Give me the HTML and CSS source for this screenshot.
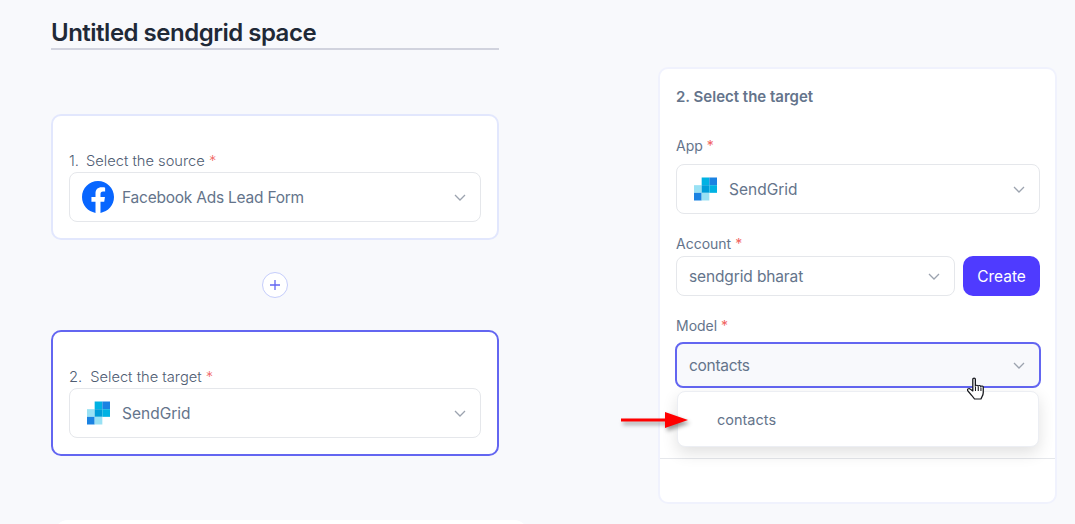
FILE: index.html
```html
<!DOCTYPE html>
<html lang="en">
<head>
<meta charset="utf-8">
<title>Untitled sendgrid space</title>
<link rel="stylesheet" href="styles.css">
</head>
<body>
<svg class="defs" width="0" height="0" aria-hidden="true">
  <defs>
    <symbol id="sendgrid" viewBox="0 0 24 24">
      <rect x="8" y="0" width="8" height="8" fill="#00b2e3"/>
      <rect x="16" y="0" width="8" height="8" fill="#1a82e2"/>
      <rect x="0" y="8" width="8" height="8" fill="#99e1f4"/>
      <rect x="8" y="8" width="8" height="8" fill="#009dd9"/>
      <rect x="16" y="8" width="8" height="8" fill="#00b2e3"/>
      <rect x="0" y="16" width="8" height="8" fill="#1a82e2"/>
      <rect x="8" y="16" width="8" height="8" fill="#99e1f4"/>
    </symbol>
    <symbol id="chevron" viewBox="0 0 12 7">
      <path d="M1 1l5 5 5-5" fill="none" stroke="#9ca3af" stroke-width="1.3"/>
    </symbol>
  </defs>
</svg>
<main class="page">
  <section class="flow">
    <h1 class="title">Untitled sendgrid space</h1>
    <div class="card card-source">
      <div class="step"><span class="step-num">1.</span>Select the source <span class="req">*</span></div>
      <div class="select select-wide">
        <svg class="fb" viewBox="0 0 24 24" aria-hidden="true"><circle cx="12" cy="12" r="11" fill="#fff"/><path fill="#0866ff" d="M24 12.073c0-6.627-5.373-12-12-12s-12 5.373-12 12c0 5.990 4.388 10.954 10.125 11.854v-8.385H7.078v-3.470h3.047V9.430c0-3.007 1.792-4.669 4.533-4.669 1.312 0 2.686.235 2.686.235v2.953H15.830c-1.491 0-1.956.925-1.956 1.874v2.250h3.328l-.532 3.470h-2.796v8.385C19.612 23.027 24 18.062 24 12.073z"/></svg>
        <span class="value value-fb">Facebook Ads Lead Form</span>
        <svg class="chev"><use href="#chevron"/></svg>
      </div>
    </div>
    <div class="add-row">
      <div class="add"><svg viewBox="0 0 12 12" aria-hidden="true"><path d="M6 1v10M1 6h10" stroke="#6366f1" stroke-width="1.3" fill="none"/></svg></div>
    </div>
    <div class="card card-target">
      <div class="step"><span class="step-num step-num-2">2.</span>Select the target <span class="req">*</span></div>
      <div class="select select-wide">
        <svg class="sg sg-left"><use href="#sendgrid"/></svg>
        <span class="value">SendGrid</span>
        <svg class="chev"><use href="#chevron"/></svg>
      </div>
    </div>
    <div class="card-next"></div>
  </section>

  <aside class="panel">
    <h2 class="panel-title">2. Select the target</h2>
    <label class="field-label label-app">App <span class="req">*</span></label>
    <div class="select select-app">
      <svg class="sg sg-right"><use href="#sendgrid"/></svg>
      <span class="value">SendGrid</span>
      <svg class="chev"><use href="#chevron"/></svg>
    </div>
    <label class="field-label label-account">Account <span class="req">*</span></label>
    <div class="account-row">
      <div class="select select-account">
        <span class="value value-account">sendgrid bharat</span>
        <svg class="chev"><use href="#chevron"/></svg>
      </div>
      <button class="create">Create</button>
    </div>
    <label class="field-label label-model">Model <span class="req">*</span></label>
    <div class="model-wrap">
      <div class="select select-model">
        <span class="value value-model">contacts</span>
        <svg class="chev"><use href="#chevron"/></svg>
      </div>
      <div class="menu"><span class="menu-item">contacts</span></div>
      <svg class="arrow" viewBox="0 0 68 18" aria-hidden="true"><path d="M0 7.500h44V1l23 8-23 8v-6.500H0z" fill="#f00"/></svg>
      <svg class="hand" viewBox="1 0 15.500 24" preserveAspectRatio="none" aria-hidden="true"><path d="M6 2.200c0-1.500 2.200-1.500 2.200 0v7c.3-1.400 2.300-1.300 2.400.1.300-1.200 2.200-1.100 2.300.3.400-1 2-.8 2.100.5v5.400c0 2-.5 3-1 4-.5 1.200-1 2.500-1 2.500H7.500s-1-1.500-2-3C4.500 17.500 1.800 14.200 1.500 13.500c-.6-1.400 1.100-2.400 2.300-1.400L6 14z" fill="#fff" stroke="#16181d" stroke-width="1.100" stroke-linejoin="round"/><path d="M8.300 10v4M10.700 10v4M13 10.500v3.500" stroke="#16181d" stroke-width=".9" fill="none"/></svg>
    </div>
    <div class="panel-divider"></div>
  </aside>
</main>
</body>
</html>
```

FILE: styles.css
```css
* { box-sizing: border-box; }
html, body { margin: 0; height: 524px; overflow: hidden; }
body {
  background: #f8f9fc;
  font-family: "Inter", "Lato", sans-serif;
  color: #64748b;
}
.defs { position: absolute; }
.page { display: flex; align-items: flex-start; padding-left: 51px; height: 524px; overflow: hidden; }
.flow { width: 480px; margin-right: -32px; flex: none; height: 524px; overflow: hidden; }
.title {
  margin: 0;
  padding-top: 18px;
  width: 448px;
  height: 50px;
  font-size: 24px;
  line-height: 30px;
  font-weight: 600;
  letter-spacing: -.5px;
  color: #1f2937;
  border-bottom: 2px solid #d1d3de;
}
.card {
  width: 448px;
  height: 126px;
  background: #fff;
  border-radius: 10px;
  padding: 0 16px 16px;
  display: flex;
  flex-direction: column;
  justify-content: flex-end;
}
.card-source { margin-top: 64px; border: 2px solid #e2e7fd; }
.card-target { border: 2px solid #6366f1; }
.step { font-size: 14.700px; line-height: 20px; font-weight: 300; color: #4f5d73; margin-bottom: 1px; }
.step-num { margin-right: 7px; }
.step-num-2 { margin-right: 8px; }
.req { color: #f1635f; }
.add-row { width: 448px; display: flex; justify-content: center; padding: 32px 0; }
.add {
  width: 26px; height: 26px;
  border: 1px solid #c5cdfb;
  border-radius: 50%;
  background: #fff;
  display: flex; align-items: center; justify-content: center;
}
.add svg { width: 12px; height: 12px; }
.card-next {
  margin-top: 64px;
  margin-left: 3px;
  width: 474px;
  height: 60px;
  background: #fff;
  border-radius: 14px;
}
.select {
  display: flex;
  align-items: center;
  background: #fff;
  border: 1px solid #e5e7eb;
  border-radius: 8px;
  font-size: 15.500px;
}
.value { flex: 1; }
.value-fb { letter-spacing: -.23px; }
.value-account { letter-spacing: -.13px; }
.value-model { letter-spacing: -.3px; }
.chev { width: 12px; height: 7px; flex: none; }
.select-wide { height: 50px; padding: 0 14px 0 12px; }
.fb { width: 32px; height: 32px; flex: none; margin-right: 8px; }
.sg { width: 23px; height: 24px; flex: none; }
.sg-left { margin: 0 12px 0 5px; }
.panel {
  width: 399px;
  height: 437px;
  flex: none;
  margin: 67px 0 0 159px;
  background: #fff;
  border: 2px solid #f0f2fd;
  border-radius: 10px;
  padding: 0 15px 0 16px;
}
.panel-title { margin: 18px 0 0; font-size: 15px; line-height: 20px; font-weight: 600; color: #64748b; }
.field-label { display: block; font-size: 14px; line-height: 18px; color: #64748b; }
.label-app { margin-top: 30px; }
.select-app { margin-top: 9px; height: 50px; padding: 0 14px 0 17px; }
.sg-right { margin-right: 12px; }
.label-account { margin-top: 21px; }
.account-row { display: flex; gap: 8px; margin-top: 3px; }
.select-account { width: 279px; height: 40px; padding: 0 14px 0 12px; }
.create {
  width: 77px; height: 40px;
  border: 0;
  border-radius: 10px;
  background: #4f3bff;
  color: #fff;
  font: inherit;
  font-size: 15.500px;
}
.label-model { margin-top: 21px; }
.model-wrap { position: relative; margin-top: 7px; }
.select-model {
  height: 46px;
  margin: 0 -1px;
  border: 2px solid #6366f1;
  background: #f8f9fc;
  padding: 0 14px 0 12px;
}
.menu {
  position: absolute;
  left: 1px; right: 1px; top: 49px;
  height: 56px;
  background: #fff;
  border-radius: 8px;
  border: 1px solid #eceef3;
  box-shadow: 0 6px 16px rgba(0,0,0,.12);
  display: flex; align-items: center;
  padding-left: 39px;
  font-size: 14.500px;
  z-index: 2;
}
.arrow {
  position: absolute;
  left: -55px; top: 69px;
  width: 68px; height: 18px;
  filter: drop-shadow(2px 3px 2px rgba(0,0,0,.4));
  z-index: 3;
}
.hand {
  position: absolute;
  left: 291px; top: 35px;
  width: 18px; height: 24px;
  z-index: 4;
}
.panel-divider { margin: 70px -15px 0 -16px; height: 1px; background: #e5e7eb; }
```
